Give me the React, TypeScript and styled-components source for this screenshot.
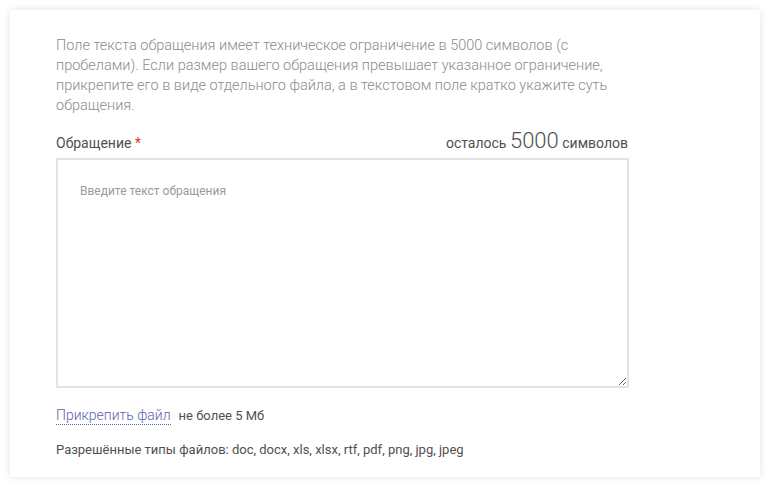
import React, { FC } from 'react';
import styled, { createGlobalStyle } from 'styled-components';

const COLORS = {
  text: '#505050',
  muted: '#8c8c8c',
  placeholder: '#9a9a9a',
  border: '#e3e3e3',
  link: '#5d62ad',
  required: '#e5302d',
};

const GlobalStyle = createGlobalStyle`
  html, body {
    margin: 0;
    background: #ffffff;
  }
  body {
    padding: 10px;
    font-family: Roboto, "Liberation Sans", Arial, sans-serif;
  }
`;

const App: FC = () => {
  return (
    <>
      <GlobalStyle />
      <Card>
        <Intro>
          Поле текста обращения имеет техническое ограничение в 5000 символов (с
          пробелами). Если размер вашего обращения превышает указанное ограничение,
          прикрепите его в виде отдельного файла, а в текстовом поле кратко укажите суть
          обращения.
        </Intro>
        <LabelRow>
          <Label>
            Обращение <Required>*</Required>
          </Label>
          <Counter>
            осталось <CounterNumber>5000</CounterNumber> символов
          </Counter>
        </LabelRow>
        <MessageField placeholder="Введите текст обращения" />
        <AttachRow>
          <AttachLink href="#">Прикрепить файл</AttachLink>
          <Hint>не более 5 Мб</Hint>
        </AttachRow>
        <FileTypes>Разрешённые типы файлов: doc, docx, xls, xlsx, rtf, pdf, png, jpg, jpeg</FileTypes>
      </Card>
    </>
  );
};

const Card = styled.div`
  box-sizing: border-box;
  width: 750px;
  height: 467px;
  padding: 26px 46px 0;
  background: #ffffff;
  box-shadow: 0 0 8px rgba(0, 0, 0, 0.12);
`;

const Intro = styled.p`
  margin: 0;
  width: 572px;
  font-size: 14.5px;
  font-weight: 300;
  line-height: 20px;
  color: ${COLORS.muted};
`;

const LabelRow = styled.div`
  display: flex;
  justify-content: space-between;
  align-items: baseline;
  width: 572px;
  margin-top: 12px;
  height: 30px;
`;

const Label = styled.span`
  font-size: 14px;
  color: ${COLORS.text};
`;

const Required = styled.span`
  color: ${COLORS.required};
`;

const Counter = styled.span`
  font-size: 14px;
  color: ${COLORS.text};
`;

const CounterNumber = styled.span`
  font-size: 22px;
  font-weight: 300;
`;

const MessageField = styled.textarea`
  display: block;
  box-sizing: border-box;
  width: 573px;
  height: 230px;
  margin: 0;
  padding: 24px 22px;
  border: 2px solid ${COLORS.border};
  border-radius: 0;
  outline: none;
  font-family: Roboto, "Liberation Sans", Arial, sans-serif;
  font-size: 12px;
  color: ${COLORS.text};
  &::placeholder {
    color: ${COLORS.placeholder};
  }
`;

const AttachRow = styled.div`
  display: flex;
  align-items: baseline;
  gap: 8px;
  margin-top: 18px;
  line-height: 20px;
`;

const AttachLink = styled.a`
  font-size: 14px;
  font-weight: 300;
  color: ${COLORS.link};
  text-decoration: none;
  border-bottom: 1px dotted ${COLORS.link};
  line-height: 17px;
`;

const Hint = styled.span`
  font-size: 13px;
  color: ${COLORS.text};
`;

const FileTypes = styled.div`
  margin-top: 15px;
  font-size: 13px;
  line-height: 18px;
  color: ${COLORS.text};
`;

export default App;
